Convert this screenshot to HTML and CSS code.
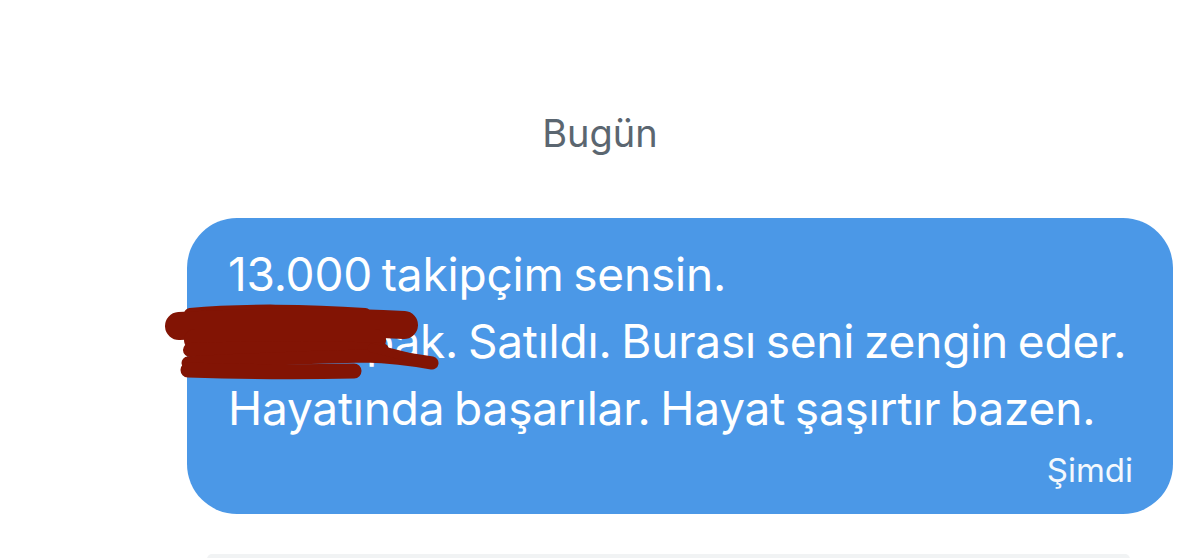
FILE: index.html
```html
<!DOCTYPE html>
<html lang="tr">
<head>
<meta charset="utf-8">
<link rel="stylesheet" href="styles.css">
</head>
<body>
<div class="page">
  <div class="day">Bugün</div>
  <div class="row">
    <div class="bubble">
      <p class="line">13.000 takipçim sensin.</p>
      <p class="line indent">pak. Satıldı. Burası seni zengin eder.</p>
      <p class="line">Hayatında başarılar. Hayat şaşırtır bazen.</p>
      <div class="time">Şimdi</div>
      <svg class="scribble" width="280" height="85" viewBox="0 0 280 85">
        <g fill="none" stroke="#821404" stroke-linecap="round" stroke-linejoin="round">
          <path d="M30 14 C 80 9, 150 10, 205 14" stroke-width="12"/>
          <path d="M19 26 C 90 22, 180 21, 244 25" stroke-width="28"/>
          <path d="M35 40 L 215 40" stroke-width="22"/>
          <path d="M30 50 C 100 48, 170 47, 222 50" stroke-width="14"/>
          <path d="M28 63 C 100 59, 160 57, 205 56 C 235 57, 255 60, 272 63" stroke-width="13"/>
          <path d="M212 48 L 272 63" stroke-width="9"/>
          <path d="M28 70 C 90 72, 150 72, 194 71" stroke-width="15"/>
        </g>
      </svg>
    </div>
  </div>
  <div class="composer"></div>
</div>
</body>
</html>
```

FILE: styles.css
```css
html, body {
  margin: 0;
  padding: 0;
  background: #ffffff;
  height: 100%;
  overflow: hidden;
}
.page {
  display: flex;
  flex-direction: column;
  font-family: "Inter", "Noto Sans", sans-serif;
  padding-top: 107px;
}
.day {
  text-align: center;
  font-size: 38px;
  line-height: 52px;
  color: #5b6670;
}
.row {
  display: flex;
  justify-content: flex-end;
  padding-right: 27px;
  margin-top: 59px;
}
.bubble {
  position: relative;
  width: 986px;
  box-sizing: border-box;
  background: #4b98e7;
  border-radius: 50px;
  padding: 23px 41px 24px 41px;
  color: #ffffff;
}
.line {
  margin: 0;
  font-size: 46px;
  line-height: 67px;
  white-space: nowrap;
  word-spacing: -3px;
  letter-spacing: -0.2px;
}
.indent {
  padding-left: 138px;
}
.time {
  text-align: right;
  font-size: 33px;
  line-height: 40px;
  margin-top: 8px;
  margin-right: -1px;
  color: #f4f8fd;
}
.scribble {
  position: absolute;
  left: -27px;
  top: 82px;
}
.composer {
  margin: 40px 70px 0 207px;
  height: 5px;
  background: #f1f3f4;
  border-radius: 24px 24px 0 0;
}
```
